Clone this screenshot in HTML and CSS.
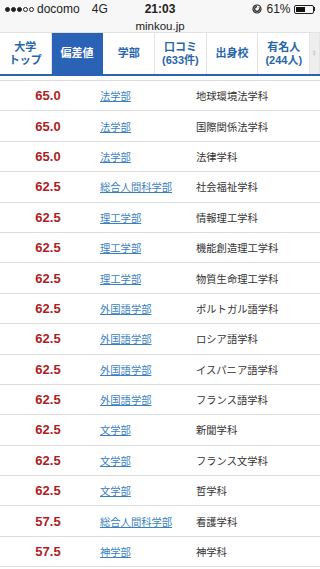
FILE: index.html
```html
<!DOCTYPE html>
<html lang="ja">
<head>
<meta charset="utf-8">
<link rel="stylesheet" href="styles.css">
</head>
<body>
<div class="status">
  <div class="sb-row">
    <div class="sb-left"><span class="dots"><i class="on"></i><i class="on"></i><i class="on"></i><i></i><i></i></span><span class="carrier">docomo</span><span class="net">4G</span></div>
    <div class="sb-time">21:03</div>
    <div class="sb-right">
      <svg class="lock" width="10" height="10" viewBox="0 0 10 10"><circle cx="5" cy="5" r="4" fill="none" stroke="#222" stroke-width="1.2"/><path d="M5 2.6 A2.4 2.4 0 1 0 7.4 5" fill="none" stroke="#222" stroke-width="1.2"/><path d="M6.2 3.6 L7.6 5 L8.6 3.6 Z" fill="#222"/></svg>
      <span>61%</span>
      <span class="battery"><span class="level"></span></span><span class="nub"></span>
    </div>
  </div>
  <div class="url">minkou.jp</div>
</div>
<nav class="tabs">
  <div class="tab">大学<br>トップ</div>
  <div class="tab active">偏差値</div>
  <div class="tab">学部</div>
  <div class="tab">口コミ<br>(633件)</div>
  <div class="tab">出身校</div>
  <div class="tab">有名人<br>(244人)</div>
  <div class="tab more">ｷ</div>
</nav>
<div class="list">
  <div class="row"><span class="score">65.0</span><span class="fac"><a href="#">法学部</a></span><span class="dep">地球環境法学科</span></div>
  <div class="row"><span class="score">65.0</span><span class="fac"><a href="#">法学部</a></span><span class="dep">国際関係法学科</span></div>
  <div class="row"><span class="score">65.0</span><span class="fac"><a href="#">法学部</a></span><span class="dep">法律学科</span></div>
  <div class="row"><span class="score">62.5</span><span class="fac"><a href="#">総合人間科学部</a></span><span class="dep">社会福祉学科</span></div>
  <div class="row"><span class="score">62.5</span><span class="fac"><a href="#">理工学部</a></span><span class="dep">情報理工学科</span></div>
  <div class="row"><span class="score">62.5</span><span class="fac"><a href="#">理工学部</a></span><span class="dep">機能創造理工学科</span></div>
  <div class="row"><span class="score">62.5</span><span class="fac"><a href="#">理工学部</a></span><span class="dep">物質生命理工学科</span></div>
  <div class="row"><span class="score">62.5</span><span class="fac"><a href="#">外国語学部</a></span><span class="dep">ポルトガル語学科</span></div>
  <div class="row"><span class="score">62.5</span><span class="fac"><a href="#">外国語学部</a></span><span class="dep">ロシア語学科</span></div>
  <div class="row"><span class="score">62.5</span><span class="fac"><a href="#">外国語学部</a></span><span class="dep">イスパニア語学科</span></div>
  <div class="row"><span class="score">62.5</span><span class="fac"><a href="#">外国語学部</a></span><span class="dep">フランス語学科</span></div>
  <div class="row"><span class="score">62.5</span><span class="fac"><a href="#">文学部</a></span><span class="dep">新聞学科</span></div>
  <div class="row"><span class="score">62.5</span><span class="fac"><a href="#">文学部</a></span><span class="dep">フランス文学科</span></div>
  <div class="row"><span class="score">62.5</span><span class="fac"><a href="#">文学部</a></span><span class="dep">哲学科</span></div>
  <div class="row"><span class="score">57.5</span><span class="fac"><a href="#">総合人間科学部</a></span><span class="dep">看護学科</span></div>
  <div class="row"><span class="score">57.5</span><span class="fac"><a href="#">神学部</a></span><span class="dep">神学科</span></div>
</div>
</body>
</html>
```

FILE: styles.css
```css
* { box-sizing: border-box; }
html, body { margin: 0; padding: 0; }
body {
  width: 320px;
  height: 569px;
  overflow: hidden;
  background: #fff;
  font-family: "Liberation Sans", "Noto Sans CJK JP", sans-serif;
  color: #222;
}
.status {
  background: #f7f7f7;
  height: 33px;
  border-bottom: 1px solid #e2e2e2;
  padding-top: 1px;
}
.sb-row {
  display: flex;
  align-items: center;
  height: 16px;
  padding: 0 5px 0 5px;
  font-size: 12px;
  position: relative;
}
.sb-left { flex: 1; display: flex; align-items: center; }
.dots { display: flex; gap: 1px; width: 32px; }
.dots i {
  display: block;
  width: 5px; height: 5px;
  border-radius: 50%;
  border: 1px solid #222;
}
.dots i.on { background: #222; }
.net { margin-left: 12px; }
.sb-time {
  position: absolute;
  left: 0; right: 0;
  text-align: center;
  font-weight: bold;
  font-size: 12px;
}
.sb-right { display: flex; align-items: center; gap: 3px; font-size: 12px; }
.lock { margin-right: 1px; }
.battery {
  width: 20px; height: 9px;
  border: 1px solid #222;
  border-radius: 2px;
  padding: 1px;
  display: inline-flex;
}
.battery .level { width: 61%; background: #111; }
.nub { width: 1.5px; height: 4px; background: #222; margin-left: -3px; }
.url {
  text-align: center;
  font-size: 11.5px;
  line-height: 14px;
  margin-top: 2px;
}
.tabs {
  display: flex;
  height: 43px;
  border-bottom: 2px solid #2a63b5;
  margin-bottom: 4px;
}
.tab {
  flex: 0 0 51.7px;
  display: flex;
  align-items: center;
  justify-content: center;
  text-align: center;
  font-size: 11px;
  line-height: 13px;
  font-weight: bold;
  color: #2766a9;
  border-right: 1px solid #e4e4e4;
}
.tab.active {
  background: #2a63b5;
  color: #fff;
  border-right-color: #2a63b5;
}
.tab.more {
  flex: 1 0 8px;
  background: #eee;
  color: #c4c4c4;
  justify-content: flex-start;
  padding-left: 2px;
  font-size: 8px;
  font-weight: normal;
  overflow: hidden;
}
.list { border-top: 1px solid #ddd; }
.row {
  display: flex;
  align-items: center;
  height: 30.4px;
  border-bottom: 1px solid #ddd;
  font-size: 10.3px;
}
.score {
  flex: 0 0 96px;
  text-align: center;
  color: #b01c23;
  font-weight: bold;
  font-size: 13px;
}
.fac { flex: 0 0 96px; padding-left: 4px; }
.fac a { color: #3a7fc0; text-decoration: underline; }
.dep { flex: 1; padding-left: 4px; color: #333; }
```
